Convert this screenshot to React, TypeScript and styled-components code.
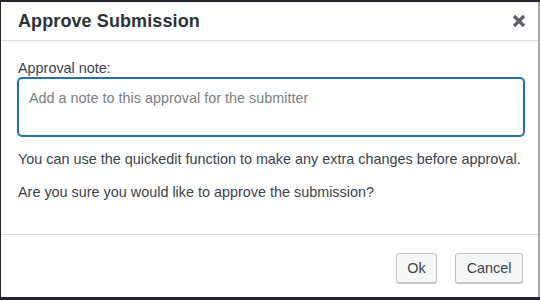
import styled, { createGlobalStyle } from "styled-components";

const GlobalStyle = createGlobalStyle`
  html, body {
    margin: 0;
    padding: 0;
    background: #262633;
  }
  body {
    font-family: "Liberation Sans", Arial, sans-serif;
    -webkit-font-smoothing: antialiased;
  }
`;

const Dialog = styled.div`
  box-sizing: border-box;
  width: 539px;
  height: 295px;
  margin: 2px 0 0 1px;
  background: #ffffff;
  border-right: 2px solid #a3a3a8;
  display: flex;
  flex-direction: column;
`;

const Header = styled.div`
  height: 38px;
  flex-shrink: 0;
  display: flex;
  align-items: center;
  justify-content: space-between;
  padding: 0 9px 0 17px;
  border-bottom: 1px solid #dcdcde;
`;

const Title = styled.h1`
  margin: 0;
  font-size: 18px;
  font-weight: 700;
  color: #2c3338;
  letter-spacing: 0.1px;
`;

const CloseButton = styled.button`
  width: 20px;
  height: 20px;
  padding: 0;
  border: none;
  background: none;
  display: flex;
  align-items: center;
  justify-content: center;
  cursor: pointer;
`;

const Body = styled.div`
  flex: 1;
  padding: 17px 14px 0 17px;
  color: #3c434a;
  font-size: 14.4px;
`;

const Label = styled.label`
  display: block;
  line-height: 20px;
`;

const NoteArea = styled.textarea`
  display: block;
  box-sizing: border-box;
  width: 100%;
  height: 58px;
  margin: 0;
  padding: 9px 10px;
  resize: none;
  font-family: inherit;
  font-size: 14.4px;
  line-height: 20px;
  color: #2c3338;
  border: 1px solid #2271b1;
  box-shadow: 0 0 0 1px #2271b1;
  border-radius: 4px;
  outline: none;

  &::placeholder {
    color: #7b7e83;
  }
`;

const Text = styled.p<{ $top: number }>`
  margin: ${(p) => p.$top}px 0 0;
  line-height: 21px;
  white-space: nowrap;
`;

const Footer = styled.div`
  height: 63px;
  flex-shrink: 0;
  box-sizing: border-box;
  border-top: 1px solid #dcdcde;
  display: flex;
  align-items: flex-start;
  justify-content: flex-end;
  gap: 18px;
  padding: 18px 15px 0 17px;
`;

const Button = styled.button`
  height: 30px;
  padding: 0 10.5px;
  font-family: inherit;
  font-size: 14.4px;
  color: #3c434a;
  background: #f6f7f7;
  border: 1px solid #c3c4c7;
  border-radius: 3px;
  box-shadow: 0 1px 0 #c3c4c7;
  cursor: pointer;
`;

const CloseIcon = () => (
  <svg width="14" height="14" viewBox="0 0 14 14">
    <path
      d="M2 2 L12 12 M12 2 L2 12"
      stroke="#5e6166"
      strokeWidth="3.2"
      strokeLinecap="butt"
    />
  </svg>
);

const App = () => {
  return (
    <>
      <GlobalStyle />
      <Dialog>
        <Header>
          <Title>Approve Submission</Title>
          <CloseButton aria-label="Close">
            <CloseIcon />
          </CloseButton>
        </Header>
        <Body>
          <Label htmlFor="approval-note">Approval note:</Label>
          <NoteArea
            id="approval-note"
            placeholder="Add a note to this approval for the submitter"
          />
          <Text $top={13}>
            You can use the quickedit function to make any extra changes before
            approval.
          </Text>
          <Text $top={12}>Are you sure you would like to approve the submission?</Text>
        </Body>
        <Footer>
          <Button>Ok</Button>
          <Button>Cancel</Button>
        </Footer>
      </Dialog>
    </>
  );
};

export default App;
